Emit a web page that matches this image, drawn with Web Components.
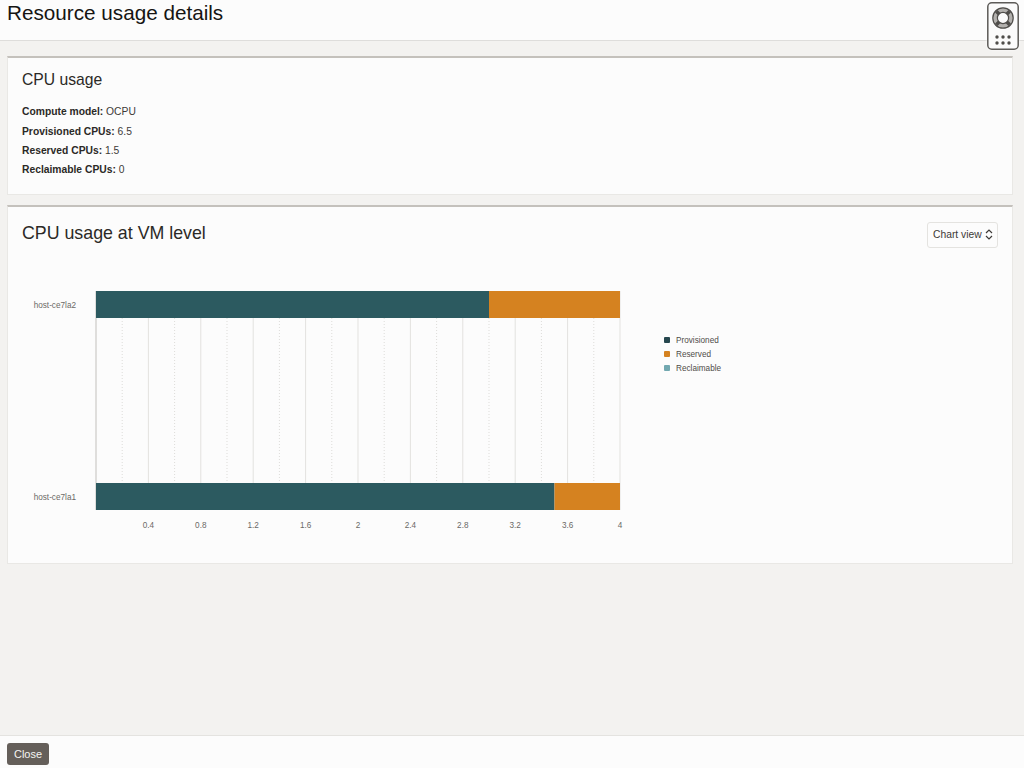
<!DOCTYPE html>
<html lang="en">
<head>
<meta charset="utf-8">
<title>Resource usage details</title>
<style>
  html, body { margin: 0; height: 100%; }
  body { font-family: "Liberation Sans", Arial, sans-serif; background: #f3f2f0; color: #161513; }
</style>
</head>
<body>
<usage-page>
  <page-header slot="header" heading="Resource usage details"></page-header>
  <usage-card heading="CPU usage">
    <info-row label="Compute model:">OCPU</info-row>
    <info-row label="Provisioned CPUs:">6.5</info-row>
    <info-row label="Reserved CPUs:">1.5</info-row>
    <info-row label="Reclaimable CPUs:">0</info-row>
  </usage-card>
  <usage-card heading="CPU usage at VM level" class="chart-card">
    <view-select slot="action">Chart view</view-select>
    <usage-chart></usage-chart>
  </usage-card>
  <page-footer slot="footer">Close</page-footer>
</usage-page>

<script>
class UsagePage extends HTMLElement {
  constructor() {
    super();
    this.attachShadow({ mode: "open" });
    this.shadowRoot.innerHTML = `
      <style>
        :host { display: flex; flex-direction: column; height: 768px; position: relative; overflow: hidden; }
        main { flex: 1; display: flex; flex-direction: column; gap: 10px; padding: 15px 11px 0 7px; }
      </style>
      <slot name="header"></slot>
      <main><slot></slot></main>
      <slot name="footer"></slot>
      <help-widget></help-widget>
    `;
  }
}

class PageHeader extends HTMLElement {
  constructor() {
    super();
    this.attachShadow({ mode: "open" });
  }

  connectedCallback() {
    this.shadowRoot.innerHTML = `
      <style>
        :host { display: block; height: 40px; background: #fcfcfc; border-bottom: 1px solid #dedddb; box-sizing: content-box; }
        h1 { margin: 0; padding: 1px 0 0 7px; font-size: 20.7px; line-height: 24px; font-weight: 400; color: #161513; }
      </style>
      <h1>${this.getAttribute("heading")}</h1>
    `;
  }
}

class HelpWidget extends HTMLElement {
  constructor() {
    super();
    this.attachShadow({ mode: "open" });
    const dots = [];
    for (const y of [35, 41]) {
      for (const x of [10, 16, 22]) {
        dots.push(`<circle cx="${x}" cy="${y}" r="1.7"/>`);
      }
    }
    this.shadowRoot.innerHTML = `
      <style>
        :host { display: block; position: absolute; left: 987px; top: 2px; width: 32px; height: 48px; filter: drop-shadow(0 0 1px #ffffff); }
        svg { display: block; }
      </style>
      <svg width="32" height="48" viewBox="0 0 32 48">
        <rect x="0.8" y="0.8" width="30.4" height="46.4" rx="4" fill="#fbfbfb" stroke="#5d5b58" stroke-width="1.5"/>
        <circle cx="16" cy="16" r="8" fill="none" stroke="#b3b1ae" stroke-width="4.4"/>
        <circle cx="16" cy="16" r="10.2" fill="none" stroke="#4f4d4a" stroke-width="1.2"/>
        <circle cx="16" cy="16" r="5.6" fill="none" stroke="#4f4d4a" stroke-width="1.2"/>
        <path d="M9.3 9.3l3 3M22.7 9.3l-3 3M9.3 22.7l3-3M22.7 22.7l-3-3" stroke="#4f4d4a" stroke-width="3.4"/>
        <g fill="#4f4d4a">${dots.join("")}</g>
      </svg>
    `;
  }
}

class UsageCard extends HTMLElement {
  constructor() {
    super();
    this.attachShadow({ mode: "open" });
  }

  connectedCallback() {
    const isChart = this.classList.contains("chart-card");
    this.shadowRoot.innerHTML = `
      <style>
        :host {
          display: block; box-sizing: border-box; height: ${isChart ? 359 : 139}px;
          background: #fcfcfc; border: 1px solid #e9e8e5; border-top: 2px solid #c4c1bc;
          padding: ${isChart ? 16 : 12}px 14px 0;
        }
        .top { display: flex; justify-content: space-between; align-items: flex-start; }
        h2 { margin: 0; font-size: ${isChart ? 17.8 : 15.7}px; line-height: 20px; font-weight: 400; color: #2b2926; }
        .body { margin-top: ${isChart ? 0 : 12.4}px; }
        ::slotted(view-select) { margin-top: -1px; }
      </style>
      <div class="top">
        <h2>${this.getAttribute("heading")}</h2>
        <slot name="action"></slot>
      </div>
      <div class="body"><slot></slot></div>
    `;
  }
}

class InfoRow extends HTMLElement {
  constructor() {
    super();
    this.attachShadow({ mode: "open" });
  }

  connectedCallback() {
    this.shadowRoot.innerHTML = `
      <style>
        :host { display: block; font-size: 10.3px; line-height: 19.2px; color: #3d3a37; }
        b { color: #2b2926; }
      </style>
      <b>${this.getAttribute("label")}</b> <slot></slot>
    `;
  }
}

class ViewSelect extends HTMLElement {
  constructor() {
    super();
    this.attachShadow({ mode: "open" });
    this.shadowRoot.innerHTML = `
      <style>
        :host {
          display: flex; align-items: center; gap: 3px; box-sizing: border-box;
          width: 71px; height: 26px; padding: 0 0 1px 5px;
          border: 1px solid #e4e3e0; border-radius: 3px; background: #fcfcfc;
          font-size: 10.3px; color: #3d3a37; white-space: nowrap;
        }
        svg { flex: none; }
      </style>
      <slot></slot>
      <svg width="8" height="13" viewBox="0 0 8 13" fill="none" stroke="#3d3a37" stroke-width="1.2">
        <path d="M1 5l3-3 3 3M1 8l3 3 3-3"/>
      </svg>
    `;
  }
}

class UsageChart extends HTMLElement {
  constructor() {
    super();
    this.attachShadow({ mode: "open" });
  }

  connectedCallback() {
    // chart origin sits at page x 22, y 258
    const left = 74, unit = 131;
    const ox = (v) => left + v * unit;
    let grid = "";
    let ticks = "";
    for (let i = 1; i <= 20; i++) {
      const v = i * 0.2;
      const x = ox(v).toFixed(1);
      if (i % 2 === 0) {
        grid += `<line x1="${x}" x2="${x}" y1="33" y2="252" stroke="#e3e2df"/>`;
        const label = Math.round(v * 10) / 10;
        ticks += `<text x="${x}" y="270" text-anchor="middle">${label}</text>`;
      } else {
        grid += `<line x1="${x}" x2="${x}" y1="33" y2="252" stroke="#dddcd9" stroke-dasharray="1 2"/>`;
      }
    }
    const bar = (y, a) => `
      <rect x="${left}" y="${y}" width="${a * unit}" height="27" fill="#2c5a60"/>
      <rect x="${ox(a)}" y="${y}" width="${(4 - a) * unit}" height="27" fill="#d58220"/>
    `;
    const legend = [["Provisioned", "#26474e", 82], ["Reserved", "#d58220", 96], ["Reclaimable", "#72a8b0", 110]]
      .map(([name, color, y]) => `
        <rect x="642" y="${y - 3}" width="6" height="6" rx="1" fill="${color}"/>
        <text x="654" y="${y + 3}" fill="#4f4c49">${name}</text>
      `).join("");
    this.shadowRoot.innerHTML = `
      <style>
        :host { display: block; margin-top: 10px; }
        svg { display: block; font-family: "Liberation Sans", Arial, sans-serif; font-size: 8.2px; }
        .axis text { fill: #6b6966; }
      </style>
      <svg width="976" height="290" viewBox="0 0 976 290">
        ${grid}
        <line x1="${left}" x2="${left}" y1="33" y2="252" stroke="#d6d5d2" stroke-width="1.5"/>
        ${bar(33, 3)}
        ${bar(225, 3.5)}
        <g class="axis">
          <text x="54" y="50" text-anchor="end">host-ce7la2</text>
          <text x="54" y="242" text-anchor="end">host-ce7la1</text>
          ${ticks}
        </g>
        ${legend}
      </svg>
    `;
  }
}

class PageFooter extends HTMLElement {
  constructor() {
    super();
    this.attachShadow({ mode: "open" });
    this.shadowRoot.innerHTML = `
      <style>
        :host { display: block; box-sizing: border-box; height: 33px; background: #fcfcfc; border-top: 1px solid #e4e3e0; padding: 7px 0 0 7px; }
        button {
          display: block; width: 42px; height: 22px; padding: 0; border: 0; border-radius: 3px;
          background: #655f5a; color: #f5f4f2; font: 11px "Liberation Sans", Arial, sans-serif;
        }
      </style>
      <button><slot></slot></button>
    `;
  }
}

customElements.define("help-widget", HelpWidget);
customElements.define("usage-page", UsagePage);
customElements.define("page-header", PageHeader);
customElements.define("usage-card", UsageCard);
customElements.define("info-row", InfoRow);
customElements.define("view-select", ViewSelect);
customElements.define("usage-chart", UsageChart);
customElements.define("page-footer", PageFooter);
</script>
</body>
</html>
